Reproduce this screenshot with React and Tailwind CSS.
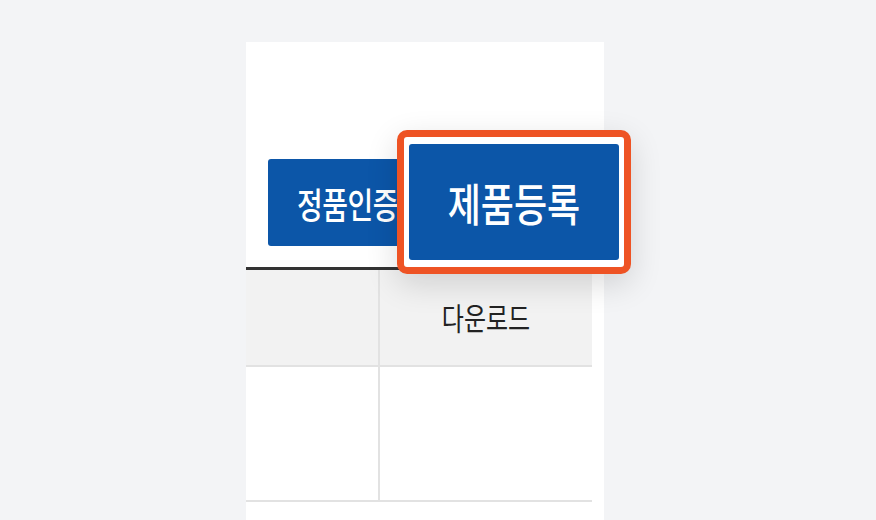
export default function App() {
  return (
    <main className="relative h-[520px] w-[876px] overflow-hidden bg-[#f3f4f6] font-['Noto_Sans_CJK_KR','Noto_Sans',sans-serif]">
      <section className="ml-[246px] mt-[42px] h-[478px] w-[358px] bg-white pt-[117px]">
        <div className="flex pl-[22px]">
          <button className="flex h-[87px] w-[200px] items-center rounded-[3px] bg-[#0c56a8] pl-[29px] text-[28px] font-medium tracking-[-0.5px] text-white">
            <span className="inline-block scale-y-[1.3]">정품인증</span>
          </button>
        </div>

        <table className="mt-[21px] w-[346px] border-collapse border-t-[3px] border-[#333]">
          <thead>
            <tr className="h-[97px] bg-[#f2f2f2]">
              <th className="w-[133px] border-b-2 border-r-2 border-[#e2e2e2]" />
              <th className="border-b-2 border-[#e2e2e2] text-[24px] font-normal text-[#222]">
                <span className="inline-block scale-y-[1.28]">다운로드</span>
              </th>
            </tr>
          </thead>
          <tbody>
            <tr className="h-[135px]">
              <td className="border-b-2 border-r-2 border-[#e2e2e2]" />
              <td className="border-b-2 border-[#e2e2e2]" />
            </tr>
          </tbody>
        </table>
      </section>

      <div className="absolute left-[397px] top-[130px] rounded-[10px] border-[7px] border-[#ee5324] bg-white px-[5px] py-[7px] shadow-[0_10px_32px_rgba(0,0,0,0.14)]">
        <button className="flex h-[116px] w-[210px] items-center justify-center rounded-[3px] bg-[#0c56a8] text-[36px] font-medium text-white">
          <span className="inline-block scale-y-[1.25]">제품등록</span>
        </button>
      </div>
    </main>
  );
}
